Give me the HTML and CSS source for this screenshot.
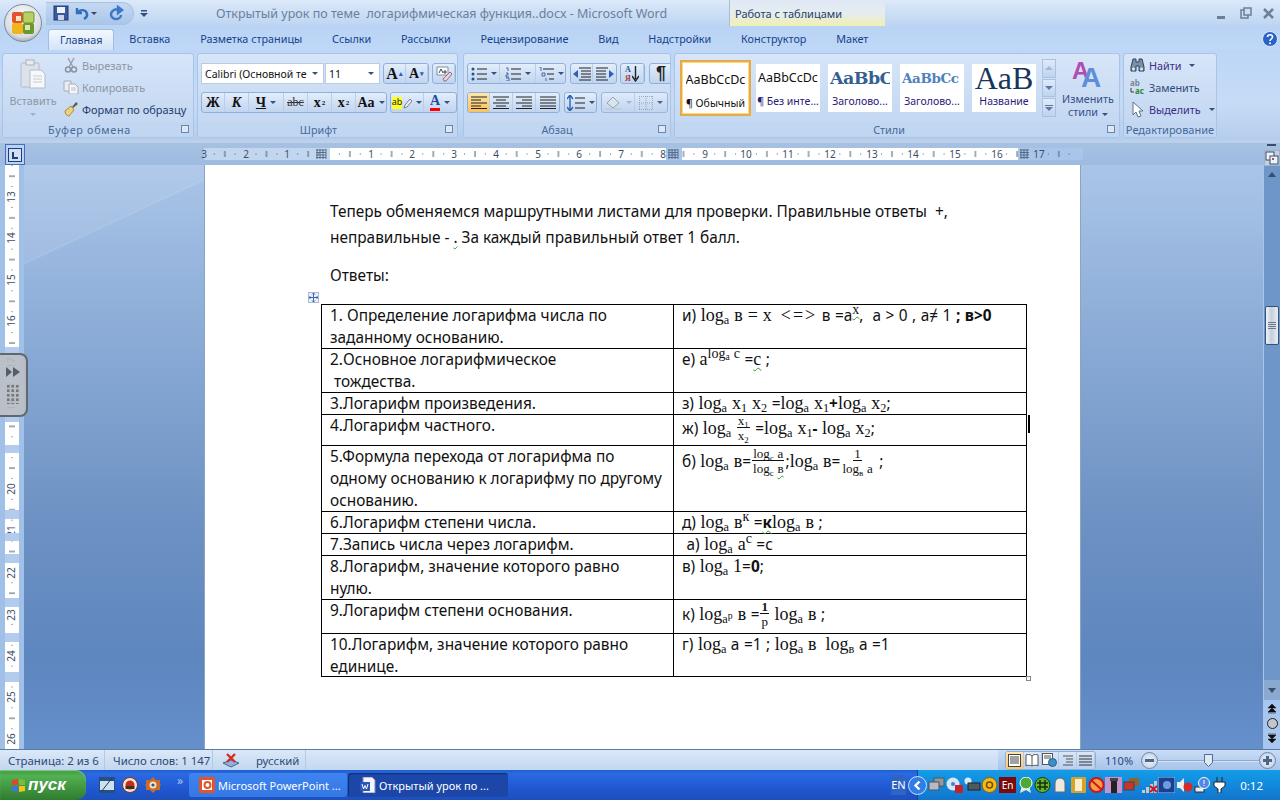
FILE: index.html
```html
<!DOCTYPE html>
<html lang="ru">
<head>
<meta charset="utf-8">
<title>Открытый урок</title>
<link rel="stylesheet" href="styles.css">
</head>
<body>
<div class="app">
  <header class="titlebar">
    <div class="qat">
      <svg width="16" height="16" viewBox="0 0 16 16"><rect x="1" y="1" width="14" height="14" fill="#3a5a9c" stroke="#1c3a78"/><rect x="4" y="2" width="8" height="6" fill="#eef3fb"/><rect x="5" y="10" width="6" height="5" fill="#c9d6ea"/></svg>
      <svg width="16" height="16" viewBox="0 0 16 16"><path d="M3 3v5h5M3.500 8C6 4 12 4 13 9c.4 2-1 4-3 5" fill="none" stroke="#2f6fc0" stroke-width="2.400"/></svg>
      <span class="dd dark"></span>
      <svg class="redo" width="16" height="16" viewBox="0 0 16 16"><path d="M10 2l4 3-4 3zM12 5C7 3 3 6 3 9.500c0 3 3 5 6 4.500 2-.3 4-2 4-4" fill="none" stroke="#3b78c8" stroke-width="2.400"/></svg>
    </div>
    <svg class="customize" width="8" height="9" viewBox="0 0 8 9"><path d="M1 1h6v1.500H1zM0 4h8L4 8z" fill="#33517e"/></svg>
    <div class="doc-title">Открытый урок по теме&nbsp; логарифмическая функция..docx - Microsoft Word</div>
    <div class="tooltab">Работа с таблицами</div>
    <div class="winctl">
      <svg width="60" height="14" viewBox="0 0 60 14"><rect x="2" y="10" width="8" height="3" fill="#6d7f96"/><rect x="26" y="4" width="7" height="8" fill="none" stroke="#6d7f96" stroke-width="1.500"/><rect x="29" y="2" width="7" height="7" fill="#c9ddf4" stroke="#6d7f96" stroke-width="1.500"/><path d="M49 3l9 9M58 3l-9 9" stroke="#6d7f96" stroke-width="2.600"/></svg>
    </div>
  </header>

  <div class="orb">
    <svg width="38" height="38" viewBox="0 0 38 38"><defs><radialGradient id="orbg" cx="50%" cy="35%" r="70%"><stop offset="0" stop-color="#fdfdfd"/><stop offset=".75" stop-color="#d8dde3"/><stop offset="1" stop-color="#8d979f"/></radialGradient></defs><circle cx="19" cy="19" r="18.500" fill="url(#orbg)" stroke="#7d8a99"/><rect x="8" y="8" width="11" height="11" rx="2" fill="#e1542c"/><rect x="8" y="19" width="11" height="11" rx="2" fill="#f2b41b"/><rect x="19" y="8" width="11" height="11" rx="2" fill="#b8cf62" stroke="#6d8f2e"/><rect x="19" y="19" width="11" height="11" rx="2" fill="#6b9a2c"/><rect x="12" y="12" width="5" height="5" fill="#fbe7c6"/><rect x="21" y="21" width="5" height="5" fill="#d9e8b4"/></svg>
  </div>

  <nav class="tabs">
    <span class="tab active">Главная</span>
    <span class="tab">Вставка</span>
    <span class="tab">Разметка страницы</span>
    <span class="tab">Ссылки</span>
    <span class="tab">Рассылки</span>
    <span class="tab">Рецензирование</span>
    <span class="tab">Вид</span>
    <span class="tab">Надстройки</span>
    <span class="tab">Конструктор</span>
    <span class="tab">Макет</span>
    <svg class="help" width="16" height="16" viewBox="0 0 16 16"><circle cx="8" cy="8" r="7.500" fill="#2a62c8" stroke="#dfe9f8"/><path d="M5.500 6c0-3 5-3 5 0 0 2-2.500 2-2.500 4" fill="none" stroke="#fff" stroke-width="1.600"/><circle cx="8" cy="12.300" r="1" fill="#fff"/></svg>
  </nav>

  <section class="ribbon">
    <div class="group g-clip">
      <div class="gbody clip-body">
        <div class="paste">
          <svg width="26" height="30" viewBox="0 0 26 30"><rect x="1" y="4" width="18" height="24" rx="1" fill="#dbe2ea" stroke="#b3bcc8"/><rect x="6" y="1" width="8" height="5" fill="#e8ecf1" stroke="#a9b2be"/><path d="M10 11h11l4 4v14H10z" fill="#f6f8fb" stroke="#b3bcc8"/><path d="M13 17h9M13 20h9M13 23h9" stroke="#c4ccd6"/></svg>
          <span class="muted">Вставить</span>
          <span class="dd light"></span>
        </div>
        <div class="clip-list">
          <div class="clip-row muted"><svg width="14" height="16" viewBox="0 0 14 16"><path d="M4 1l5 9M10 1L5 10" stroke="#98a2ad" stroke-width="1.500"/><circle cx="4" cy="12.500" r="2.500" fill="none" stroke="#8a95a2" stroke-width="1.500"/><circle cx="10" cy="12.500" r="2.500" fill="none" stroke="#8a95a2" stroke-width="1.500"/></svg><span>Вырезать</span></div>
          <div class="clip-row muted"><svg width="16" height="14" viewBox="0 0 16 14"><path d="M1 1h7v10H1z" fill="#e9edf2" stroke="#a4aeb9"/><path d="M6 4h6l3 3v7H6z" fill="#f5f7fa" stroke="#a4aeb9"/><path d="M8 8h5M8 10h5" stroke="#b7c0ca"/></svg><span>Копировать</span></div>
          <div class="clip-row strong"><svg width="16" height="16" viewBox="0 0 16 16"><path d="M9 6l4-5 2 2-5 4z" fill="#62584d"/><path d="M2 10l6-5 3 4-5 6c-2 0-4-2-4-5z" fill="#ecd27f" stroke="#a98c3a"/></svg><span>Формат по образцу</span></div>
        </div>
      </div>
      <div class="glabel">Буфер обмена<i class="launcher"></i></div>
    </div>

    <div class="group g-font">
      <div class="gbody rows">
        <div class="row">
          <div class="combo font-name"><span class="combo-text">Calibri (Основной те</span><span class="dd"></span></div>
          <div class="combo font-size"><span class="combo-text">11</span><span class="dd"></span></div>
          <div class="btns ml3"><span class="cell w22 serif b big">A<sup class="mini">▴</sup></span><span class="cell w22 serif b">A<sup class="mini">▾</sup></span></div>
          <div class="btns ml3"><span class="cell w22"><svg width="18" height="16" viewBox="0 0 18 16"><path d="M2 1h11v8H2z" fill="#fff" stroke="#7d8ea5"/><path d="M8 13l7-7 2 2-6 7H9z" fill="#f1d3d3" stroke="#8b6f7d"/><path d="M4 7l2-4 2 4M9 5h2v2H9z" fill="none" stroke="#445"/></svg></span></div>
        </div>
        <div class="row">
          <div class="btns">
            <span class="cell w23 serif b">Ж</span><span class="cell w24 serif bi">К</span><span class="cell w35 serif b"><u>Ч</u><span class="dd"></span></span><span class="cell w24 serif strike">abc</span><span class="cell w24 serif b">x<sub class="s8">2</sub></span><span class="cell w24 serif b">x<sup class="s8">2</sup></span><span class="cell w30 serif b nob">Aa<span class="dd"></span></span>
          </div>
          <div class="btns ml3">
            <span class="cell w33"><span class="hl">ab</span><svg width="9" height="12" viewBox="0 0 9 12"><path d="M1 11l1-3 5-6 2 2-5 6z" fill="#eee" stroke="#6f7f96"/></svg><span class="dd"></span></span><span class="cell w32 nob"><span class="fc serif b">A</span><span class="dd"></span></span>
          </div>
        </div>
      </div>
      <div class="glabel">Шрифт<i class="launcher"></i></div>
    </div>

    <div class="group g-para">
      <div class="gbody rows">
        <div class="row">
          <div class="btns">
            <span class="cell w32"><svg width="16" height="14" viewBox="0 0 16 14"><path d="M6 2h10M6 7h10M6 12h10" stroke="#222"/><circle cx="2" cy="2" r="1.500" fill="#25508f"/><circle cx="2" cy="7" r="1.500" fill="#25508f"/><circle cx="2" cy="12" r="1.500" fill="#25508f"/></svg><span class="dd"></span></span>
            <span class="cell w36"><svg width="16" height="14" viewBox="0 0 16 14"><path d="M6 2h10M6 7h10M6 12h10" stroke="#222"/><path d="M1 1h2v3M1 6h2v2H1v2h3M1 11h3v3H1" fill="none" stroke="#25508f" stroke-width=".8"/></svg><span class="dd"></span></span>
            <span class="cell w29 nob"><svg width="16" height="14" viewBox="0 0 16 14"><path d="M5 2h11M9 7h7M11 12h5" stroke="#222"/><path d="M1 0h2v4M4 6h3v3H4zM8 11v3" fill="none" stroke="#25508f" stroke-width=".8"/></svg><span class="dd"></span></span>
          </div>
          <div class="btns ml4">
            <span class="cell w22"><svg width="18" height="14" viewBox="0 0 18 14"><path d="M6 1h12M8 4h10M8 7h10M8 10h10M6 13h12" stroke="#222"/><path d="M0 7l5-4v8z" fill="#2e62b5"/></svg></span>
            <span class="cell w23 nob"><svg width="18" height="14" viewBox="0 0 18 14"><path d="M0 1h12M0 4h10M0 7h10M0 10h10M0 13h12" stroke="#222"/><path d="M18 7l-5-4v8z" fill="#2e62b5"/></svg></span>
          </div>
          <div class="btns ml3"><span class="cell w23 sortcell"><span class="sort"><b class="sa">A</b><b class="sy">Я</b></span><svg width="7" height="16" viewBox="0 0 7 16"><path d="M3.500 0v13M0 10l3.500 5L7 10" fill="none" stroke="#222" stroke-width="1.400"/></svg></span></div>
          <div class="btns ml4"><span class="cell w23 pil">¶</span></div>
        </div>
        <div class="row">
          <div class="btns">
            <span class="cell w22 on"><svg width="16" height="13" viewBox="0 0 16 13"><path d="M0 1h16M0 4h10M0 7h16M0 10h10M0 12.500h16" stroke="#222"/></svg></span>
            <span class="cell w23"><svg width="16" height="13" viewBox="0 0 16 13"><path d="M0 1h16M3 4h10M0 7h16M3 10h10M0 12.500h16" stroke="#222"/></svg></span>
            <span class="cell w23"><svg width="16" height="13" viewBox="0 0 16 13"><path d="M0 1h16M6 4h10M0 7h16M6 10h10M0 12.500h16" stroke="#222"/></svg></span>
            <span class="cell w23 nob"><svg width="16" height="13" viewBox="0 0 16 13"><path d="M0 1h16M0 4h16M0 7h16M0 10h16M0 12.500h16" stroke="#222"/></svg></span>
          </div>
          <div class="btns ml4"><span class="cell w31 nob"><svg width="18" height="16" viewBox="0 0 18 16"><path d="M3 1v14M0 4l3-4 3 4M0 12l3 4 3-4" fill="none" stroke="#2e62b5" stroke-width="1.400"/><path d="M8 3h10M8 8h10M8 13h10" stroke="#222"/></svg><span class="dd"></span></span></div>
          <div class="btns ml4 dim">
            <span class="cell w33"><svg width="18" height="16" viewBox="0 0 18 16"><path d="M3 8l6-6 6 6-6 5z" fill="#dfe6ee" stroke="#8e9aa8"/><path d="M1 14h16" stroke="#c4ccd4" stroke-width="2"/></svg><span class="dd light"></span></span>
            <span class="cell w32 nob"><svg width="14" height="14" viewBox="0 0 14 14"><path d="M0 .5h14M0 7h14M0 13.500h14M.5 0v14M7 0v14M13.500 0v14" stroke="#93a0b2" stroke-dasharray="1 1"/></svg><span class="dd"></span></span>
          </div>
        </div>
      </div>
      <div class="glabel">Абзац<i class="launcher"></i></div>
    </div>

    <div class="group g-style">
      <div class="gbody style-body">
        <div class="gallery">
          <div class="style sel"><span class="sample s-normal">AaBbCcDc</span><span class="sname blk">¶ Обычный</span></div>
          <div class="style"><span class="sample s-normal">AaBbCcDc</span><span class="sname pur">¶ Без инте...</span></div>
          <div class="style"><span class="sample s-h1">AaBbC</span><span class="sname pur">Заголово...</span></div>
          <div class="style"><span class="sample s-h2">AaBbCc</span><span class="sname pur">Заголово...</span></div>
          <div class="style"><span class="sample s-title">AaB</span><span class="sname pur">Название</span></div>
          <div class="scroller"><span class="sc"><i class="tri up"></i></span><span class="sc"><i class="tri"></i></span><span class="sc"><i class="bar"></i><i class="tri"></i></span></div>
        </div>
        <div class="change">
          <svg width="34" height="30" viewBox="0 0 34 30"><text x="1" y="20" class="aa1">A</text><text x="10" y="28" class="aa2">A</text></svg>
          <span class="change-text">Изменить<br>стили<span class="dd"></span></span>
        </div>
      </div>
      <div class="glabel">Стили<i class="launcher"></i></div>
    </div>

    <div class="group g-edit">
      <div class="gbody edit-body">
        <div class="edit-row"><svg width="15" height="14" viewBox="0 0 15 14"><path d="M3 1h3v3h3V1h3l2 8v4H9V8H6v5H1V9z" fill="#7b8fa8" stroke="#2d3f5a"/><circle cx="3.500" cy="11" r="1.500" fill="#dfe8f5"/><circle cx="11.500" cy="11" r="1.500" fill="#dfe8f5"/></svg><span>Найти</span><span class="dd"></span></div>
        <div class="edit-row rep"><svg width="15" height="16" viewBox="0 0 15 16"><text x="0" y="7" class="rep1">ab</text><text x="5" y="15" class="rep2">ac</text><path d="M1 9v4h3" fill="none" stroke="#2d3f5a"/></svg><span>Заменить</span></div>
        <div class="edit-row"><svg width="13" height="17" viewBox="0 0 13 17"><path d="M2 1v13l3-3 2 5 3-1-2-5h4z" fill="#fff" stroke="#5f7086"/></svg><span>Выделить</span><span class="dd"></span></div>
      </div>
      <div class="glabel edit-label">Редактирование</div>
    </div>
  </section>

  <div class="rulerband">
    <div class="corner"><svg width="14" height="14" viewBox="0 0 14 14"><rect x=".5" y=".5" width="13" height="13" fill="#cfe0f6" stroke="#1f3f70"/><path d="M5 4v6h5" fill="none" stroke="#1f3f70" stroke-width="2"/></svg></div>
    <svg class="hruler" width="1083" height="12" viewBox="0 0 1083 12">
      <defs><pattern id="hticks" x="329" y="0" width="41.700" height="12" patternUnits="userSpaceOnUse"><rect x="9.900" y="5.500" width="1" height="1" fill="#4a5c76"/><rect x="20.400" y="3" width="1" height="6" fill="#4a5c76"/><rect x="30.800" y="5.500" width="1" height="1" fill="#4a5c76"/></pattern></defs>
      <rect x="204" width="879" height="12" fill="#a9c5e9"/>
      <rect x="204" width="126" height="12" fill="#c2d6ef"/>
      <rect x="330" width="336" height="12" fill="#fff"/>
      <rect x="682" width="336" height="12" fill="#fff"/>
      <rect x="204" width="879" height="12" fill="url(#hticks)"/>
      <g class="rn" text-anchor="middle">
        <text x="204" y="10">3</text><text x="246" y="10">2</text><text x="287" y="10">1</text>
        <text x="371" y="10">1</text><text x="412" y="10">2</text><text x="454" y="10">3</text><text x="496" y="10">4</text><text x="538" y="10">5</text><text x="579" y="10">6</text><text x="621" y="10">7</text><text x="663" y="10">8</text><text x="705" y="10">9</text><text x="746" y="10">10</text><text x="788" y="10">11</text><text x="830" y="10">12</text><text x="872" y="10">13</text><text x="913" y="10">14</text><text x="955" y="10">15</text><text x="997" y="10">16</text><text x="1039" y="10">17</text>
      </g>
      <path d="M316 2h10M316 4.500h10M316 7h10M316 9.500h10M317 1v10M320 1v10M323 1v10M326 1v10M668 2h10M668 4.500h10M668 7h10M668 9.500h10M669 1v10M672 1v10M675 1v10M678 1v10" stroke="#4a5c76" stroke-width=".8"/>
      <path d="M1020 2h9M1020 4.500h9M1020 7h9M1020 9.500h9M1021 1v10M1024 1v10M1027 1v10" stroke="#4a5c76" stroke-width=".8"/>
    </svg>
  </div>

  <main class="workspace">
    <aside class="vcol">
      <svg class="vruler" width="14" height="584" viewBox="0 165 14 584">
        <defs><pattern id="vticks" x="0" y="197" width="14" height="41.700" patternUnits="userSpaceOnUse"><rect x="6.500" y="9.900" width="1" height="1" fill="#4a5c76"/><rect x="4" y="20.400" width="6" height="1" fill="#4a5c76"/><rect x="6.500" y="30.800" width="1" height="1" fill="#4a5c76"/></pattern></defs>
        <rect y="165" width="14" height="584" fill="#fff"/>
        <g fill="#b3cbec"><rect y="347" width="14" height="75"/></g>
        <rect y="165" width="14" height="584" fill="url(#vticks)"/>
        <g class="rn" text-anchor="middle">
          <text transform="translate(10 197) rotate(-90)">13</text><text transform="translate(10 238) rotate(-90)">14</text><text transform="translate(10 280) rotate(-90)">15</text><text transform="translate(10 321) rotate(-90)">16</text>
          <text transform="translate(10 363) rotate(-90)">17</text><text transform="translate(10 405) rotate(-90)">18</text>
          <text transform="translate(10 489) rotate(-90)">20</text><text transform="translate(10 531) rotate(-90)">21</text><text transform="translate(10 573) rotate(-90)">22</text><text transform="translate(10 615) rotate(-90)">23</text><text transform="translate(10 656) rotate(-90)">24</text><text transform="translate(10 697) rotate(-90)">25</text><text transform="translate(10 739) rotate(-90)">26</text>
        </g>
        <g fill="#b3cbec"><rect y="445" width="14" height="8"/><rect y="510" width="14" height="9"/><rect y="533" width="14" height="8"/><rect y="554" width="14" height="9"/><rect y="598" width="14" height="9"/><rect y="633" width="14" height="9"/><rect y="672" width="14" height="10"/></g>
      </svg>
    </aside>
    <div class="docarea">
      <article class="page">
        <p class="para">Теперь обменяемся маршрутными листами для проверки. Правильные ответы&nbsp; +, неправильные - <span class="sq">.</span> За каждый правильный ответ 1 балл.</p>
        <p class="para answers">Ответы:</p>
        <div class="tablewrap">
          <span class="anchor"><svg width="9" height="9" viewBox="0 0 9 9"><path d="M4.500 0v9M0 4.500h9M3 1.500L4.500 0 6 1.500M3 7.500L4.500 9 6 7.500M1.500 3L0 4.500 1.500 6M7.500 3L9 4.500 7.500 6" fill="none" stroke="#3a68b8"/></svg></span>
          <table class="answers-table">
            <tr class="r44"><td><div class="t">1. Определение логарифма числа по заданному основанию.</div></td>
              <td><div class="mt">и) <span class="f">log<sub>а</sub> в = х</span>&nbsp; <span class="iff">&lt;=&gt;</span> в =а<sup class="f sq">х</sup>,&nbsp; а &gt; 0 , а≠ 1 <b>; в&gt;0</b></div></td></tr>
            <tr class="r44"><td><div class="t">2.Основное логарифмическое<br>&nbsp;тождества.</div></td>
              <td><div class="mt">е) <span class="f">а</span><sup class="f up">log<sub>а</sub> с</sup> =<span class="f sq">с</span> ;</div></td></tr>
            <tr class="r22"><td><div class="t">3.Логарифм произведения.</div></td>
              <td><div class="mt">з) <span class="f">log<sub>а</sub> х<sub>1</sub> х<sub>2</sub></span> =<span class="f">log<sub>а</sub> х<sub>1</sub></span><b>+</b><span class="f">log<sub>а</sub> х<sub>2</sub></span>;</div></td></tr>
            <tr class="r31"><td><div class="t">4.Логарифм частного.</div></td>
              <td><div class="mt d3">ж) <span class="f">log<sub>а</sub></span> <span class="frac"><span class="num">х<sub>1</sub></span><span class="den">х<sub>2</sub></span></span> =<span class="f">log<sub>а</sub> х<sub>1</sub></span><b>-</b> <span class="f">log<sub>а</sub> х<sub>2</sub></span>;</div></td></tr>
            <tr class="r66"><td><div class="t">5.Формула перехода от логарифма по одному основанию к логарифму по другому основанию.</div></td>
              <td><div class="mt d5">б) <span class="f">log<sub>а</sub> в</span>=<span class="frac"><span class="num">log<sub>с</sub> а</span><span class="den">log<sub>с</sub> <span class="sq">в</span></span></span>;<span class="f">log<sub>а</sub> в</span>=<span class="frac"><span class="num">1</span><span class="den">log<sub>в</sub> а</span></span> ;</div></td></tr>
            <tr class="r22"><td><div class="t">6.Логарифм степени числа.</div></td>
              <td><div class="mt">д) <span class="f">log<sub>а</sub> в</span><sup class="f">к</sup> =<b class="sq">к</b><span class="f">log<sub>а</sub> в</span> ;</div></td></tr>
            <tr class="r22"><td><div class="t">7.Запись числа через логарифм.</div></td>
              <td><div class="mt">&nbsp;а) <span class="f">log<sub>а</sub> а</span><sup class="f">с</sup> =с</div></td></tr>
            <tr class="r44"><td><div class="t">8.Логарифм, значение которого равно нулю.</div></td>
              <td><div class="mt">в) <span class="f">log<sub>а</sub> 1</span>=<b>0</b>;</div></td></tr>
            <tr class="r34"><td><div class="t">9.Логарифм степени основания.</div></td>
              <td><div class="mt d4">к) <span class="f">log<sub>а<sup class="pp">р</sup></sub> в</span> =<span class="frac"><span class="num"><b>1</b></span><span class="den">р</span></span> <span class="f">log<sub>а</sub> в</span> ;</div></td></tr>
            <tr class="r43"><td><div class="t">10.Логарифм, значение которого равно единице.</div></td>
              <td><div class="mt">г) <span class="f">log<sub>а</sub></span> а =1 ; <span class="f">log<sub>а</sub> в</span>&nbsp; <span class="f">log<sub>в</sub></span> а =1</div></td></tr>
          </table>
          <i class="resize"></i>
          <i class="caret"></i>
        </div>
      </article>
    </div>
    <aside class="vscroll">
      <i class="split"></i>
      <span class="splitbtn"><svg width="14" height="14" viewBox="0 0 14 14"><rect x="1" y="1" width="8" height="8" fill="#eef3fb" stroke="#34506f"/><rect x="5" y="5" width="8" height="8" fill="#eef3fb" stroke="#34506f"/><path d="M7 7l2 2M9 7L7 9" stroke="#b0506f"/></svg></span>
      <i class="arrow-up"></i>
      <div class="thumb"><i></i><i></i><i></i><i></i></div>
      <div class="track"></div>
      <div class="arrowdown"><i class="arrow-dn"></i></div>
      <div class="nav">
        <svg width="10" height="10" viewBox="0 0 10 10"><path d="M5 0L1 4h8zM5 4L1 8h8zM1 9h8" fill="#111" stroke="#111" stroke-width=".5"/></svg>
        <svg width="11" height="11" viewBox="0 0 11 11"><circle cx="5.500" cy="5.500" r="5" fill="#c3c6cb" stroke="#222"/></svg>
        <svg width="10" height="10" viewBox="0 0 10 10"><path d="M5 10L1 6h8zM5 6L1 2h8zM1 1h8" fill="#111" stroke="#111" stroke-width=".5"/></svg>
      </div>
    </aside>
  </main>

  <div class="sidehandle"><svg width="14" height="10" viewBox="0 0 14 10"><path d="M0 0l6 5-6 5zM7 0l7 5-7 5z" fill="#555c66"/></svg><span class="dots"></span></div>

  <footer class="status">
    <div class="status-left">
      <span class="st st1">Страница: 2 из 6</span>
      <span class="st st2">Число слов: 1 147</span>
      <span class="st st3"><svg width="18" height="16" viewBox="0 0 18 16"><path d="M1 11l8-3 8 3-8 4z" fill="#8eb3dd" stroke="#42648f"/><path d="M5 2l8 8M13 2l-8 8" stroke="#d32f20" stroke-width="2.400"/></svg></span>
      <span class="st st4">русский</span>
    </div>
    <div class="status-right">
      <div class="views">
        <span class="view on"><svg width="13" height="13" viewBox="0 0 13 13"><rect x=".5" y=".5" width="12" height="12" fill="#fff" stroke="#444"/><path d="M2 3h9M2 5h9M2 7h9M2 9h9" stroke="#444"/></svg></span>
        <span class="view"><svg width="14" height="13" viewBox="0 0 14 13"><path d="M7 2C5 0 2 0 1 1v11c1-1 4-1 6 0 2-1 5-1 6 0V1C12 0 9 0 7 2zM7 2v10" fill="#fff" stroke="#555"/></svg></span>
        <span class="view"><svg width="15" height="14" viewBox="0 0 15 14"><rect x=".5" y=".5" width="10" height="11" fill="#fff" stroke="#555"/><path d="M2 3h7M2 5h7" stroke="#555"/><circle cx="10.500" cy="9.500" r="4" fill="#3f8fc0" stroke="#25608c"/></svg></span>
        <span class="view"><svg width="13" height="13" viewBox="0 0 13 13"><path d="M2 2h10M5 5h7M5 8h7M2 11h10" stroke="#555"/></svg></span>
        <span class="view"><svg width="13" height="13" viewBox="0 0 13 13"><path d="M0 2h13M0 5h13M0 8h13M0 11h13" stroke="#333"/></svg></span>
      </div>
      <span class="zoomval">110%</span>
      <span class="zbtn"><i class="minus"></i></span>
      <span class="zline"><svg class="zthumb" width="9" height="13" viewBox="0 0 9 13"><path d="M.5.5h8v8l-4 4-4-4z" fill="#dfe8f4" stroke="#4f6d93"/></svg></span>
      <span class="zbtn"><i class="minus"></i><i class="plus"></i></span>
    </div>
  </footer>

  <div class="taskbar">
    <div class="start"><svg width="15" height="15" viewBox="0 0 15 15"><path d="M1 2l6-1v6H1z" fill="#e0462a"/><path d="M8 1l6 1v5H8z" fill="#7cbc3a"/><path d="M1 8h6v6l-6-1z" fill="#3b78d8"/><path d="M8 8h6v5l-6 1z" fill="#f5c518"/></svg><span>пуск</span></div>
    <div class="quick">
      <svg width="16" height="16" viewBox="0 0 16 16"><rect width="16" height="16" fill="#26507f"/><rect x="1" y="4" width="14" height="9" fill="#cfe0ef"/><path d="M2 15L13 1" stroke="#1a3a63"/></svg>
      <svg width="16" height="16" viewBox="0 0 16 16"><circle cx="8" cy="8" r="7.500" fill="#f1e7d8" stroke="#8a2b1c"/><circle cx="8" cy="8" r="4.500" fill="#c02f1d"/><path d="M3.500 9h9v3h-9z" fill="#40311f"/></svg>
      <svg width="16" height="16" viewBox="0 0 16 16"><path d="M8 0l3 3h4v4l1 1-1 1v4h-4l-3 3-3-3H1V9L0 8l1-1V3h4z" fill="#c96c28"/><circle cx="8" cy="8" r="3.500" fill="#f6e3c3"/><circle cx="8" cy="8" r="1.600" fill="#33508f"/></svg>
      <span class="chev">»</span>
    </div>
    <div class="task t-ppt"><svg width="16" height="16" viewBox="0 0 16 16"><rect width="16" height="16" rx="2" fill="#e1542c"/><rect x="3" y="3" width="10" height="10" fill="#fff"/><circle cx="8.500" cy="8" r="3" fill="none" stroke="#e1542c" stroke-width="2"/></svg><span>Microsoft PowerPoint ...</span></div>
    <div class="task t-word"><svg width="16" height="16" viewBox="0 0 16 16"><path d="M3 0h9l3 3v13H3z" fill="#f3f6fb" stroke="#88a"/><rect y="5" width="10" height="9" fill="#2b58b8"/><path d="M2 7l1.500 5L5 8.500 6.500 12 8 7" fill="none" stroke="#fff"/></svg><span>Открытый урок по ...</span></div>
    <div class="lang">EN</div>
    <div class="tray">
      <span class="collapse"><svg width="9" height="11" viewBox="0 0 9 11"><path d="M6.500 1.500L2.500 5.500l4 4" fill="none" stroke="#fff" stroke-width="2.400"/></svg></span>
      <svg class="ti" width="17" height="16" viewBox="0 0 17 16"><rect x="6" y="1" width="10" height="8" fill="#8f9aa5" stroke="#555"/><rect x="1" y="5" width="10" height="8" fill="#b3bcc6" stroke="#555"/></svg>
      <svg class="ti" width="17" height="16" viewBox="0 0 17 16"><circle cx="7" cy="7" r="6.500" fill="#d8e7f5"/><circle cx="7" cy="7" r="2" fill="#3a84d0"/><rect x="9" y="8" width="8" height="8" fill="#c5232a"/></svg>
      <svg class="ti" width="17" height="16" viewBox="0 0 17 16"><circle cx="4" cy="4" r="3.500" fill="#d6eaf9"/><rect x="4" y="6" width="12" height="7" fill="#505860" stroke="#222"/></svg>
      <svg class="ti" width="17" height="16" viewBox="0 0 17 16"><circle cx="8.500" cy="8" r="7.500" fill="#f0b91e" stroke="#8c5e06"/><circle cx="8.500" cy="8" r="3" fill="none" stroke="#7c4c00" stroke-width="1.500"/></svg>
      <span class="en-red">En</span>
      <svg class="ti" width="17" height="16" viewBox="0 0 17 16"><path d="M3 16l2-8h7l2 8-5-3z" fill="#e7e7e0"/><circle cx="9" cy="6" r="6" fill="#4cab38" stroke="#fff"/></svg>
      <svg class="ti" width="17" height="16" viewBox="0 0 17 16"><circle cx="8.500" cy="8" r="7.500" fill="#67b52a" stroke="#16350c"/><path d="M3 6h11M3 10h11M6 3v10M11 3v10" stroke="#15300c" stroke-width="1.500"/></svg>
      <svg class="ti" width="17" height="16" viewBox="0 0 17 16"><path d="M3 15V6a5 5 0 0 1 10 0v9z" fill="#eee9dc" stroke="#666"/></svg>
      <svg class="ti" width="17" height="16" viewBox="0 0 17 16"><rect x="1" width="15" height="16" rx="1" fill="#d8a12a"/><rect x="5" y="2" width="7" height="12" fill="#f8efcf"/></svg>
      <svg class="ti" width="17" height="16" viewBox="0 0 17 16"><circle cx="8.500" cy="8" r="7" fill="#f0a244" stroke="#d3141a" stroke-width="2"/><path d="M3 3l11 10" stroke="#d3141a" stroke-width="2"/></svg>
      <svg class="ti" width="17" height="16" viewBox="0 0 17 16"><rect width="17" height="16" fill="#c793cf"/><rect x="6" y="3" width="6" height="13" fill="#222"/><rect x="5" y="1" width="8" height="3" fill="#444"/></svg>
      <svg class="ti" width="17" height="16" viewBox="0 0 17 16"><rect x="6" y="1" width="10" height="8" fill="#93632a"/><rect x="1" y="5" width="10" height="8" fill="#c8342c" stroke="#444"/></svg>
      <svg class="ti" width="17" height="16" viewBox="0 0 17 16"><path d="M1 13h3v3H1zM5 10h3v6H5zM9 7h3v9H9zM13 4h3v12h-3z" fill="#c9c9c9"/><path d="M9 15l7-6M9 9l7 6" stroke="#d3141a" stroke-width="2"/></svg>
      <svg class="ti" width="17" height="16" viewBox="0 0 17 16"><rect width="17" height="16" fill="#1c3f8f" stroke="#a8c1e8"/><circle cx="9" cy="8" r="4" fill="#6e9ce0"/></svg>
      <svg class="ti" width="17" height="16" viewBox="0 0 17 16"><path d="M1 5h3l4-4v14l-4-4H1z" fill="#eee"/><circle cx="12" cy="10" r="4.500" fill="#d72a25"/></svg>
      <svg class="ti" width="17" height="16" viewBox="0 0 17 16"><rect x="1" y="10" width="9" height="5" fill="#eee" stroke="#234"/><circle cx="10" cy="6" r="5.500" fill="#4f86e6" stroke="#fff"/><path d="M10 3v4M10 8v1" stroke="#fff"/></svg>
      <svg class="ti" width="17" height="16" viewBox="0 0 17 16"><path d="M6 0v5M11 0v5M3 5h11v4l-4 3v4H7v-4L3 9z" fill="#fff" stroke="#222"/></svg>
      <span class="clock">0:12</span>
    </div>
  </div>
</div>
</body>
</html>
```

FILE: styles.css
```css
* { box-sizing: border-box; }
html, body { margin: 0; padding: 0; }
body { width: 1280px; height: 800px; overflow: hidden; font-family: "Noto Sans", "Open Sans", sans-serif; background: #5b82b8; }
.app { position: relative; width: 1280px; height: 800px; display: flex; flex-direction: column; overflow: hidden; }
i { display: block; font-style: normal; }

/* title bar */
.titlebar { height: 26px; flex: none; display: flex; align-items: center; background: linear-gradient(#dce9f9 0, #c9ddf5 60%, #bdd4f2 100%); position: relative; }
.qat { margin-left: 46px; width: 88px; height: 23px; padding-left: 7px; display: flex; align-items: center; gap: 5px; border-radius: 0 12px 12px 0; background: linear-gradient(#c5d8f1, #aac6ea); border: 1px solid #a9c3e6; border-left: 0; }
.redo { margin-left: 6px; }
.customize { margin-left: 6px; flex: none; }
.doc-title { margin-left: 68px; width: 513px; font-size: 12.500px; color: #6c7f9a; white-space: nowrap; }
.tooltab { width: 156px; height: 26px; padding: 6px 0 0 5px; font-size: 11px; line-height: 15px; color: #24406a; background: linear-gradient(#dfe8f5 0, #e5edf0 50%, #f1efb0 100%); border-left: 1px solid #a7bcd6; white-space: nowrap; }
.winctl { margin-left: auto; margin-right: 5px; display: flex; }

.orb { position: absolute; left: 4px; top: 4px; width: 38px; height: 38px; z-index: 3; }

/* tabs */
.tabs { height: 24px; flex: none; display: flex; align-items: flex-end; padding-left: 48px; background: linear-gradient(#b9d3f4, #bfd8f8); position: relative; }
.tab { height: 21px; line-height: 20px; padding: 0 14.900px; font-size: 10.800px; color: #15428b; white-space: nowrap; }
.tab.active { padding: 0 11px; margin-right: 0; background: linear-gradient(#f4f8fe, #d3e3f8); border: 1px solid #9fbde4; border-bottom: 0; border-radius: 3px 3px 0 0; color: #15428b; }
.help { margin-left: auto; margin-right: 2px; margin-bottom: 3px; }

/* ribbon */
.ribbon { height: 90px; flex: none; display: flex; gap: 3px; padding: 3px 3px 2px 2px; background: linear-gradient(#bdd6f7 0, #c6dbf6 60%, #b5cdec 100%); }
.group { height: 85px; flex: none; display: flex; flex-direction: column; border: 1px solid #a8c4e6; border-radius: 3px; background: linear-gradient(#d7e5f8, #c5d9f2 75%); overflow: hidden; }
.g-clip { width: 192px; }
.g-clip .glabel { padding-right: 17px; letter-spacing: .7px; }
.g-font { width: 261px; }
.g-font .glabel { padding-right: 18px; }
.g-para { width: 208px; margin-left: 2px; }
.g-para .glabel { padding-right: 20px; }
.g-style { width: 446px; }
.g-style .glabel { padding-right: 16px; }
.g-edit { width: 94px; }
.gbody { height: 68px; flex: none; }
.glabel { height: 15px; line-height: 15px; position: relative; text-align: center; font-size: 10.800px; color: #47689a; background: #c1d7f1; }
.edit-label { white-space: nowrap; font-size: 11px; }
.launcher { position: absolute; right: 4px; top: 3px; width: 8px; height: 8px; border: 1px solid #6a86ac; background: #dce8f7; }

.clip-body { display: flex; }
.paste { width: 60px; padding: 5px 0 0 0; display: flex; flex-direction: column; align-items: center; font-size: 10.800px; }
.paste span.muted { margin-top: 5px; line-height: 13px; }
.paste .dd { margin: 6px 0 0; }
.muted { color: #8d97a4; }
.clip-list { display: flex; flex-direction: column; }
.clip-row { height: 22px; display: flex; align-items: center; gap: 3px; font-size: 11px; white-space: nowrap; }
.clip-row svg { width: 16px; flex: none; }
.strong { color: #1f3d6e; }

.dd { display: inline-block; width: 0; height: 0; margin-left: 4px; border: 3px solid transparent; border-top: 3px solid #33517e; border-bottom: 0; }
.dd.light { border-top-color: #9fb0c6; }
.dd.dark { margin-left: -4px; border-top-color: #446; }

.rows { padding: 9px 0 0 3px; display: flex; flex-direction: column; gap: 8px; }
.row { display: flex; height: 21px; }
.ml3 { margin-left: 3px; }
.ml4 { margin-left: 4px; }
.combo { height: 21px; display: flex; align-items: center; justify-content: space-between; padding: 0 5px 0 3px; background: #fff; border: 1px solid #b5cbe6; font-size: 10.500px; color: #111; white-space: nowrap; }
.font-name { width: 123px; }
.font-size { width: 55px; margin-left: 1px; }
.btns { display: flex; height: 21px; border: 1px solid #8fb0dc; border-radius: 3px; background: linear-gradient(#e4eefb, #d0e0f5 50%, #c1d5f0); }
.cell { height: 19px; display: flex; align-items: center; justify-content: center; gap: 1px; border-right: 1px solid #b7cdea; font-size: 12px; color: #111; flex: none; }
.cell .dd { margin-left: 3px; }
.nob { border-right: 0; }
.w22 { width: 22px; } .w23 { width: 23px; } .w24 { width: 24px; } .w29 { width: 29px; } .w30 { width: 30px; } .w31 { width: 31px; } .w32 { width: 32px; } .w33 { width: 33px; } .w35 { width: 35px; } .w36 { width: 36px; }
.serif { font-family: "Liberation Serif", serif; }
.b { font-weight: 700; font-size: 14px; }
.big { font-size: 16px; }
.bi { font-weight: 700; font-style: italic; font-size: 14px; }
.strike { text-decoration: line-through; font-size: 12px; color: #333; }
.mini { font-size: 7px; line-height: 0; color: #2e62b5; vertical-align: 6px; }
.s8 { font-size: 7px; line-height: 0; }
.hl { background: #ffff20; border-bottom: 3px solid #ffff20; font-size: 9px; line-height: 9px; color: #222; }
.fc { border-bottom: 3px solid #f00; line-height: 14px; color: #1f4a9c; font-size: 14px; }
.on { background: linear-gradient(#fde7a8, #fbc05c); border-radius: 2px 0 0 2px; }
.sortcell { gap: 1px; }
.sort { display: flex; flex-direction: column; font: 700 8px/9px "Liberation Serif", serif; }
.sa { color: #25508f; }
.sy { color: #a33b3b; }
.pil { font: 700 18px/19px "Liberation Sans", sans-serif; color: #222; }
.dim { opacity: .85; }

.style-body { display: flex; padding: 5px 0 0 3px; }
.gallery { width: 378px; height: 58px; display: flex; position: relative; gap: 8px; align-items: center; padding-left: 6px; }
.style { width: 64px; height: 48px; background: #fff; display: flex; flex-direction: column; align-items: center; overflow: hidden; flex: none; white-space: nowrap; }
.style.sel { width: 71px; height: 56px; margin: 0 -3px 0 -4px; padding-top: 4px; border: 2px solid #e8a94b; box-shadow: inset 0 0 0 1px #ffd97a; }
.sample { height: 28px; line-height: 28px; width: 60px; overflow: hidden; display: block; text-align: left; }
.s-normal { font: 12.500px/28px "Noto Sans", sans-serif; color: #111; }
.s-h1 { font: 700 17.500px/28px "DejaVu Serif", serif; color: #365f91; letter-spacing: -.6px; }
.s-h2 { font: 700 13.500px/28px "DejaVu Serif", serif; color: #4f81bd; letter-spacing: -.4px; }
.s-title { font: 32px/28px "Liberation Serif", serif; color: #17365d; text-align: center; }
.sname { font-size: 10.500px; line-height: 18px; }
.blk { color: #111; }
.pur { color: #2a1a78; }
.scroller { position: absolute; left: 364px; top: 0; width: 14px; height: 58px; display: flex; flex-direction: column; gap: 1px; }
.sc { flex: 1; display: flex; flex-direction: column; align-items: center; justify-content: center; gap: 1px; background: linear-gradient(#dfeafa, #bed3ee); border: 1px solid #a9c2e3; }
.tri { width: 0; height: 0; border: 4px solid transparent; border-top: 4px solid #5c7aa4; border-bottom: 0; }
.tri.up { border-top: 0; border-bottom: 4px solid #a8b7ca; }
.bar { width: 8px; height: 1px; background: #5c7aa4; }
.change { width: 62px; display: flex; flex-direction: column; align-items: center; margin-left: 1px; }
.change-text { font-size: 10.800px; line-height: 13px; text-align: center; color: #34508a; margin-top: 3px; }
.aa1 { font: 700 24px "Liberation Sans", sans-serif; fill: #b24bb5; }
.aa2 { font: 700 28px "Liberation Sans", sans-serif; fill: #5c8fd8; }

.edit-body { padding: 0 0 0 6px; display: flex; flex-direction: column; }
.edit-row { height: 22px; display: flex; align-items: center; gap: 4px; font-size: 10.800px; color: #3d2c85; white-space: nowrap; }
.edit-row svg { width: 15px; flex: none; }
.rep { color: #2f4a78; }
.rep1 { font: 700 8px "Noto Sans", sans-serif; fill: #7b8797; }
.rep2 { font: 700 8px "Noto Sans", sans-serif; fill: #2c8a2c; }

/* rulers */
.rulerband { height: 25px; flex: none; position: relative; background: linear-gradient(#a7c1e2 0, #9ebbe0 100%); border-top: 3px solid #bdd0ea; }
.corner { position: absolute; left: 5px; top: 1px; width: 20px; height: 21px; border: 1px solid #3f6fc4; background: #bcd2f0; display: flex; align-items: center; justify-content: center; }
.hruler { position: absolute; left: 0; top: 5px; }
.rn text, .rn { font: 10px "Noto Sans", sans-serif; fill: #3e4e66; }

.workspace { height: 584px; flex: none; display: flex; }
.vcol { width: 24px; flex: none; padding: 0 0 0 5px; background: #a1c0e8; }
.vruler { display: block; }
.docarea { flex: 1; padding-left: 180px; overflow: hidden; background: linear-gradient(155deg, rgba(255,255,255,.08) 88px, rgba(255,255,255,.16) 89px, rgba(255,255,255,0) 91px), linear-gradient(#aac5e8 0, #8fafd9 25%, #6d92c3 60%, #5e86bf 85%, #6590cc 100%); }
.page { width: 877px; height: 584px; padding: 34px 54px 0 125px; background: #fff; border: 1px solid #8ba4c4; border-width: 0 1px; }
.para { margin: 0; font: 15.400px/26px "Noto Sans", "Open Sans", sans-serif; color: #111; width: 650px; }
.answers { margin-top: 12px; }
.tablewrap { position: relative; margin: 15px 0 0 -9px; width: 706px; }
.anchor { position: absolute; left: -13px; top: -12px; width: 11px; height: 11px; border: 1px solid #a9b8cc; display: flex; align-items: center; justify-content: center; background: #eef3f9; }
.answers-table { width: 706px; table-layout: fixed; border-collapse: collapse; font: 15.400px/22px "Noto Sans", "Open Sans", sans-serif; color: #111; }
.answers-table td { border: 1px solid #000; padding: 0 8px; vertical-align: top; }
.answers-table td:first-child { width: 352px; }
.t { margin: 0 0 -3px; }
.r44 { height: 44px; }
.r22 { height: 22px; }
.r31 { height: 31px; }
.r66 { height: 66px; }
.r34 { height: 34px; }
.r43 { height: 43px; }
.mt { height: 18px; line-height: 22px; white-space: nowrap; word-spacing: .5px; }
.d3 { padding-top: 3px; }
.d4 { padding-top: 4px; }
.d5 { padding-top: 5px; }
.f { font: 18px/20px "Liberation Serif", serif; }
.mt sub, .mt sup { line-height: 0; font-size: .68em; }
.mt sup { vertical-align: 7px; }
.mt sub { vertical-align: -3px; }
.mt sup.f { font-size: 14px; }
.mt sup.up { font-size: 14px; }
.mt sup sub { font-size: .68em; vertical-align: -2px; }
.iff { font: 18px/20px "Liberation Serif", serif; letter-spacing: 2px; }
.frac { display: inline-flex; flex-direction: column; align-items: center; vertical-align: middle; height: 30px; margin: -8px 1px -4px; }
.num, .den { padding: 0 1px; height: 15px; line-height: 15px; font-size: 13px; font-family: "Liberation Serif", serif; white-space: nowrap; }
.num { border-bottom: 1px solid #111; }
.pp { vertical-align: 4px !important; font-size: .8em !important; }
.sq { text-decoration: underline wavy #2f9a2f 1px; text-underline-offset: 2px; }
.resize { position: absolute; right: -4px; bottom: -4px; width: 5px; height: 5px; border: 1px solid #888; background: #fff; }
.caret { position: absolute; right: -3px; top: 111px; width: 2px; height: 18px; background: #000; }

/* scrollbar */
.vscroll { width: 17px; flex: none; display: flex; flex-direction: column; align-items: center; position: relative; background: #6f96c9; border-left: 1px solid #a9c5ea; }
.split { position: absolute; top: -21px; left: 3px; width: 9px; height: 2px; background: #3b4d6b; }
.splitbtn { position: absolute; top: -15px; left: 0; width: 16px; height: 16px; background: #c7cfdb; border: 1px solid #9fb2cb; display: flex; align-items: center; justify-content: center; }
.arrow-up { margin-top: 7px; width: 0; height: 0; border: 4px solid transparent; border-bottom: 5px solid #3b4d6b; border-top: 0; }
.thumb { margin: 129px 0 0 0; width: 14px; height: 39px; flex: none; border: 1px solid #36507c; border-radius: 2px; background: linear-gradient(90deg, #f1f4f8, #c4cfdb 45%, #e9eef4); display: flex; flex-direction: column; align-items: center; justify-content: center; gap: 1px; }
.thumb i { width: 8px; height: 1px; background: #6c7a8d; }
.track { flex: 1; }
.arrowdown { width: 16px; height: 20px; flex: none; background: #8ba9d0; display: flex; align-items: center; justify-content: center; }
.arrow-dn { width: 0; height: 0; border: 4px solid transparent; border-top: 5px solid #3b4d6b; border-bottom: 0; }
.nav { width: 16px; height: 49px; flex: none; background: #a9c7ee; display: flex; flex-direction: column; align-items: center; justify-content: space-between; padding: 4px 0 6px; }

.sidehandle { position: absolute; left: 0; top: 353px; width: 28px; height: 64px; padding: 12px 0 0 6px; z-index: 4; background: rgba(188, 191, 196, .88); border: 2px solid #63676d; border-left: 0; border-radius: 0 8px 8px 0; }
.sidehandle svg { display: block; }
.dots { display: block; width: 14px; height: 20px; margin-top: 7px; background-image: radial-gradient(circle, #777 1.300px, transparent 1.500px); background-size: 4.500px 4.500px; }

/* status */
.status { height: 21px; flex: none; display: flex; font-size: 11.400px; color: #2c4a74; border-top: 1px solid #5a7aa8; }
.status-left { width: 998px; flex: none; display: flex; align-items: center; background: linear-gradient(#dbe8f8, #c3d7f0); }
.status-right { flex: 1; display: flex; align-items: center; background: linear-gradient(#c9dcf5, #a7c4ea); padding-left: 7px; }
.st { height: 100%; display: flex; align-items: center; white-space: nowrap; }
.st1 { width: 105px; padding-left: 8px; border-right: 1px solid #b3c8e3; }
.st2 { width: 108px; padding-left: 8px; border-right: 1px solid #b3c8e3; }
.st3 { width: 43px; padding-left: 9px; }
.st4 { width: 50px; border-right: 1px solid #b3c8e3; }
.views { width: 91px; height: 19px; display: flex; border: 1px solid #92aed4; border-radius: 3px; background: linear-gradient(#d9e6f8, #b9d0ef); }
.view { flex: 1; display: flex; align-items: center; justify-content: center; border-right: 1px solid #b4c9e6; }
.view.on { background: linear-gradient(#fbe6ae, #f9c865); }
.zoomval { width: 36px; margin-left: 9px; font-size: 11px; color: #274b7d; }
.zbtn { position: relative; flex: none; width: 17px; height: 17px; border-radius: 50%; border: 1px solid #6d87ad; background: radial-gradient(#eef3fa, #b9cbe3); }
.minus { position: absolute; left: 3px; top: 6px; width: 9px; height: 3px; background: #4d6685; }
.plus { position: absolute; left: 6px; top: 3px; width: 3px; height: 9px; background: #4d6685; }
.zline { position: relative; flex: none; width: 101px; height: 1px; background: #8ea9cd; box-shadow: 0 1px 0 #d6e4f6; }
.zthumb { position: absolute; left: 46px; top: -6px; }

/* taskbar */
.taskbar { height: 30px; flex: none; display: flex; align-items: center; background: linear-gradient(#1f5fd4 0, #2a6ae2 12%, #2058d2 60%, #1d4fbc 100%); color: #fff; font-size: 11px; position: relative; }
.start { width: 86px; height: 30px; padding-left: 11px; display: flex; align-items: center; gap: 2px; flex: none; border-radius: 0 10px 10px 0; background: linear-gradient(#3c9a3c 0, #52b152 20%, #3d8e3d 70%, #2e7d2e 100%); box-shadow: inset 0 1px 1px rgba(255,255,255,.4); font: italic 700 17px "Liberation Sans", sans-serif; }
.quick { width: 103px; flex: none; padding-left: 13px; display: flex; align-items: center; gap: 7px; }
.chev { font-size: 12px; color: #a9c7f5; margin: -8px 0 0 9px; line-height: 1; }
.task { height: 24px; display: flex; align-items: center; gap: 3px; flex: none; border-radius: 3px; white-space: nowrap; font-size: 11px; color: #fff; }
.t-ppt { width: 158px; margin-right: 1px; padding-left: 10px; background: linear-gradient(#3e83ee, #3478e6); }
.t-word { width: 160px; padding-left: 12px; background: #1c47a8; box-shadow: inset 1px 1px 1px #10306f; }
.lang { margin-left: 383px; margin-right: 11px; width: 15px; height: 20px; line-height: 20px; text-align: center; background: #2e64c4; font-size: 11px; flex: none; }
.tray { height: 30px; flex: 1; display: flex; align-items: center; background: linear-gradient(#139de8, #1289dd 50%, #1275cc); border-left: 1px solid #1042a0; position: relative; }
.collapse { width: 19px; height: 19px; flex: none; margin: 0 1px 0 -10px; border-radius: 50%; display: flex; align-items: center; justify-content: center; background: #2f7de5; border: 1px solid #cfe3fa; }
.ti { flex: none; margin: 0 .35px; }
.en-red { width: 17px; height: 16px; flex: none; margin: 0 .35px; background: #7b0a0a; font-size: 10px; line-height: 16px; text-align: center; }
.clock { margin-left: auto; margin-right: 17px; font-size: 11.500px; color: #fff; }
```
